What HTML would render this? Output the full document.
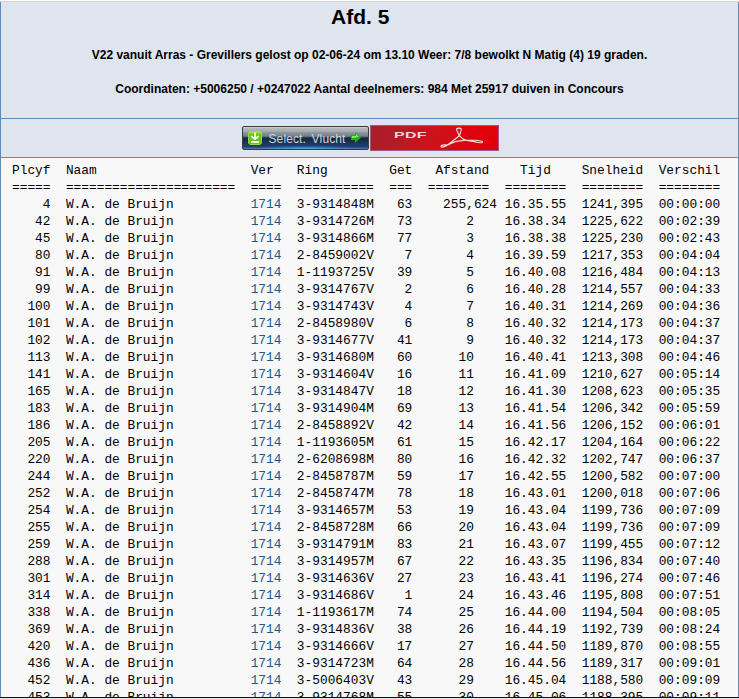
<!DOCTYPE html>
<html><head><meta charset="utf-8">
<style>
html,body{margin:0;padding:0;background:#fff;width:739px;height:699px;overflow:hidden;position:relative}
body{font-family:"Liberation Sans",sans-serif;color:#000}
#topline{position:absolute;left:0;top:1px;width:739px;height:1px;background:#d6d6d6}
#hdr{position:absolute;left:0;top:2px;width:737px;height:116px;background:#dee5ee;border-left:1px solid #5c8bb9;border-right:1px solid #5c8bb9}
#sep1{position:absolute;left:0;top:118px;width:739px;height:1px;background:#5c8bb9}
#btns{position:absolute;left:0;top:119px;width:737px;height:38px;background:#dee5ee;border-left:1px solid #5c8bb9;border-right:1px solid #5c8bb9}
#sep2{position:absolute;left:0;top:157px;width:739px;height:1px;background:#5c8bb9}
#tbl{position:absolute;left:0;top:158px;width:737px;height:539px;background:#f8f8f8;border-left:1px solid #5c8bb9;border-right:1px solid #5c8bb9;overflow:hidden}
#botline{position:absolute;left:0;top:697px;width:739px;height:1px;background:#111}
#botline2{position:absolute;left:0;top:698px;width:739px;height:1px;background:#e6e6e6}
.t{position:absolute;white-space:nowrap;font-weight:bold}
#title{font-size:21px;left:331px;top:5px}
#l2{font-size:12px;left:0;width:739px;text-align:center;top:48px}
#l3{font-size:12px;left:0;width:739px;text-align:center;top:82px}
pre{position:absolute;margin:0;left:11px;top:4px;font-family:"Liberation Mono",monospace;font-size:12.83px;line-height:17px;color:#000}
pre a{color:#20588a;text-decoration:none}
#sel{position:absolute;left:242px;top:126px;width:125px;height:22px;border:1px solid #3c3c3c;border-radius:2px;overflow:hidden;
 background:linear-gradient(#c8cacc 0px,#c8cacc 1px,#b6babd 1px,#a2a8ac 5px,#909aa0 5px,#74828c 9px,#5e6e7e 9px,#5e6e7e 10px,#2c4054 10px,#2c4054 11px,#12273b 11px,#132a40 12px,#244270 20px,#2d5684 20px,#2d5684 21px,#4274a8 21px,#4274a8 22px)}
#sel:after{content:"";position:absolute;left:0;top:18px;width:125px;height:4px;background:radial-gradient(ellipse 50px 3px at 62px 3.5px,rgba(70,200,230,0.6),rgba(70,200,230,0) 100%)}
#sel span{position:absolute;left:25.5px;top:5px;font-size:12px;color:#cdd6de;letter-spacing:0.12px;word-spacing:2px;z-index:2}
#sel svg{position:absolute;left:0;top:0;z-index:2}
#pdf{position:absolute;left:370px;top:125px;width:127px;height:24px;border:1px solid #9a5a8a;overflow:hidden;
 background:linear-gradient(100deg,#a81e2a 0%,#b81a26 25%,#cc121c 50%,#dc0610 70%,#e00008 100%)}
#pdf span{position:absolute;left:23px;top:3px;font-size:9.6px;font-weight:bold;color:#f0d6da;letter-spacing:0.2px;transform:scaleX(1.66);transform-origin:0 0}
#pdf svg{position:absolute;left:0;top:0}
</style></head><body>
<div id="topline"></div>
<div id="hdr"></div>
<div id="sep1"></div>
<div id="btns"></div>
<div id="sep2"></div>
<div id="tbl"><pre>Plcyf  Naam                    Ver   Ring        Get   Afstand    Tijd    Snelheid  Verschil
=====  ======================  ====  ==========  ===  ========  ========  ========  ========
    4  W.A. de Bruijn          <a>1714</a>  3-9314848M   63    255,624 16.35.55  1241,395  00:00:00
   42  W.A. de Bruijn          <a>1714</a>  3-9314726M   73       2    16.38.34  1225,622  00:02:39
   45  W.A. de Bruijn          <a>1714</a>  3-9314866M   77       3    16.38.38  1225,230  00:02:43
   80  W.A. de Bruijn          <a>1714</a>  2-8459002V    7       4    16.39.59  1217,353  00:04:04
   91  W.A. de Bruijn          <a>1714</a>  1-1193725V   39       5    16.40.08  1216,484  00:04:13
   99  W.A. de Bruijn          <a>1714</a>  3-9314767V    2       6    16.40.28  1214,557  00:04:33
  100  W.A. de Bruijn          <a>1714</a>  3-9314743V    4       7    16.40.31  1214,269  00:04:36
  101  W.A. de Bruijn          <a>1714</a>  2-8458980V    6       8    16.40.32  1214,173  00:04:37
  102  W.A. de Bruijn          <a>1714</a>  3-9314677V   41       9    16.40.32  1214,173  00:04:37
  113  W.A. de Bruijn          <a>1714</a>  3-9314680M   60      10    16.40.41  1213,308  00:04:46
  141  W.A. de Bruijn          <a>1714</a>  3-9314604V   16      11    16.41.09  1210,627  00:05:14
  165  W.A. de Bruijn          <a>1714</a>  3-9314847V   18      12    16.41.30  1208,623  00:05:35
  183  W.A. de Bruijn          <a>1714</a>  3-9314904M   69      13    16.41.54  1206,342  00:05:59
  186  W.A. de Bruijn          <a>1714</a>  2-8458892V   42      14    16.41.56  1206,152  00:06:01
  205  W.A. de Bruijn          <a>1714</a>  1-1193605M   61      15    16.42.17  1204,164  00:06:22
  220  W.A. de Bruijn          <a>1714</a>  2-6208698M   80      16    16.42.32  1202,747  00:06:37
  244  W.A. de Bruijn          <a>1714</a>  2-8458787M   59      17    16.42.55  1200,582  00:07:00
  252  W.A. de Bruijn          <a>1714</a>  2-8458747M   78      18    16.43.01  1200,018  00:07:06
  254  W.A. de Bruijn          <a>1714</a>  3-9314657M   53      19    16.43.04  1199,736  00:07:09
  255  W.A. de Bruijn          <a>1714</a>  2-8458728M   66      20    16.43.04  1199,736  00:07:09
  259  W.A. de Bruijn          <a>1714</a>  3-9314791M   83      21    16.43.07  1199,455  00:07:12
  288  W.A. de Bruijn          <a>1714</a>  3-9314957M   67      22    16.43.35  1196,834  00:07:40
  301  W.A. de Bruijn          <a>1714</a>  3-9314636V   27      23    16.43.41  1196,274  00:07:46
  314  W.A. de Bruijn          <a>1714</a>  3-9314686V    1      24    16.43.46  1195,808  00:07:51
  338  W.A. de Bruijn          <a>1714</a>  1-1193617M   74      25    16.44.00  1194,504  00:08:05
  369  W.A. de Bruijn          <a>1714</a>  3-9314836V   38      26    16.44.19  1192,739  00:08:24
  420  W.A. de Bruijn          <a>1714</a>  3-9314666V   17      27    16.44.50  1189,870  00:08:55
  436  W.A. de Bruijn          <a>1714</a>  3-9314723M   64      28    16.44.56  1189,317  00:09:01
  452  W.A. de Bruijn          <a>1714</a>  3-5006403V   43      29    16.45.04  1188,580  00:09:09
  453  W.A. de Bruijn          <a>1714</a>  3-9314768M   55      30    16.45.06  1188,395  00:09:11</pre></div>
<div id="botline"></div><div id="botline2"></div>
<div class="t" id="title">Afd. 5</div>
<div class="t" id="l2">V22 vanuit Arras - Grevillers gelost op 02-06-24 om 13.10 Weer: 7/8 bewolkt N Matig (4) 19 graden.</div>
<div class="t" id="l3">Coordinaten: +5006250 / +0247022 Aantal deelnemers: 984 Met 25917 duiven in Concours</div>
<div id="sel"><svg width="125" height="22" viewBox="0 0 125 22">
<polygon points="7,4.5 17,4.5 18.5,6 18.5,16 17,17.5 7,17.5 5.5,16 5.5,6" fill="#6cc418" stroke="#90d850" stroke-width="1"/>
<polygon points="7,4 17,4 19,6 19,6.5 5,6.5 5,6" fill="#a8e070" opacity="0.7"/>
<rect x="11" y="5.5" width="2" height="6.5" fill="#f4fff0"/>
<polyline points="8.3,9.2 12,12.2 15.7,9.2" fill="none" stroke="#f4fff0" stroke-width="1.7"/>
<rect x="8" y="14" width="8" height="2" fill="#eaffd8"/>
<polygon points="108,8 112,8 112,5 118,10.5 112,16 112,13 108,13" fill="#1fae1f"/>
<polygon points="109,9 113,9 113,7 116,10 109,11" fill="#a8f08a" opacity="0.8"/>
</svg><span>Select. Vlucht</span></div>
<div id="pdf"><span>PDF</span><svg width="127" height="24" viewBox="371 126 127 24">
<g fill="none" stroke="#f4dcde" stroke-width="1.15" stroke-linecap="round">
<path d="M459.4,135.7 C458.2,133 456.2,129.8 456.6,128.9 C457.2,127.9 460.6,127.8 461.2,128.9 C461.8,130 460.2,133 459.4,135.7"/>
<path d="M459.4,135.7 L448.5,144.2 C446,146.2 441.8,147.8 441,146.7 C440.3,145.5 444.5,144.3 448.2,144.9 C451,143.6 453,142.3 455.2,141.6 L465.3,140.1 L474.5,140.2 C479.5,140.4 483.2,141.3 482.4,142.3 C481.5,143.2 477.5,142.5 474.2,141.6 L465.3,140.1"/>
<path d="M459.4,135.7 C461,137.6 463,139.2 465.3,140.1"/>
</g></svg></div>
</body></html>
